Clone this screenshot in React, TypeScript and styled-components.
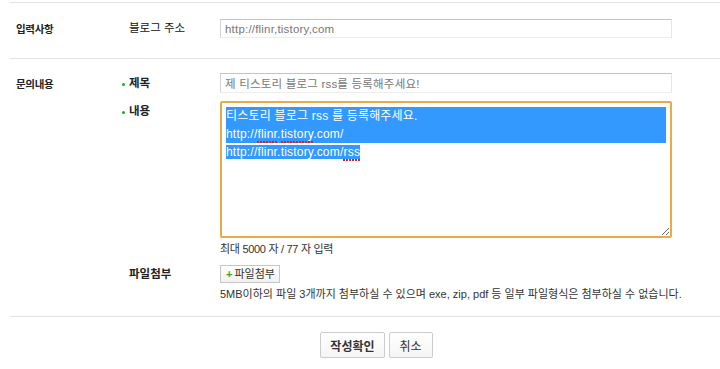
import React from "react";
import styled, { createGlobalStyle } from "styled-components";

const GlobalStyle = createGlobalStyle`
  html, body { margin: 0; padding: 0; background: #fff; overflow: hidden; }
  body {
    font-family: "Liberation Sans", "Noto Sans CJK KR", sans-serif;
    color: #333;
  }
  * { box-sizing: border-box; }
`;

const Page = styled.div`
  padding: 2px 0 0 10px;
`;

const Form = styled.form`
  width: 733px;
  border-top: 1px solid #e3e3e3;
`;

const Section = styled.div<{ $pad: string }>`
  display: grid;
  grid-template-columns: 112px 1fr;
  align-items: start;
  padding: ${(p) => p.$pad};
  border-bottom: 1px solid #e3e3e3;
`;

const SectionLabel = styled.div<{ $offset?: number }>`
  padding-left: 6px;
  margin-top: ${(p) => p.$offset ?? 0}px;
  font-size: 10.5px;
  font-weight: 700;
  line-height: 20px;
  letter-spacing: -0.3px;
  color: #222;
`;

const Fields = styled.div`
  display: flex;
  flex-direction: column;
`;

const Field = styled.div<{ $gap?: number }>`
  display: grid;
  grid-template-columns: 98px 1fr;
  align-items: start;
  margin-top: ${(p) => p.$gap ?? 0}px;
`;

const FieldLabel = styled.div<{ $h: number; $bullet?: boolean; $bold?: boolean }>`
  padding-left: ${(p) => (p.$bullet ? 0 : 7)}px;
  font-size: 11.5px;
  font-weight: ${(p) => (p.$bold ? 700 : 400)};
  line-height: ${(p) => p.$h}px;
  color: ${(p) => (p.$bold ? "#222" : "#111")};
  white-space: nowrap;
  &::before {
    content: "";
    display: ${(p) => (p.$bullet ? "inline-block" : "none")};
    width: 3px;
    height: 3px;
    border-radius: 50%;
    background: #22a722;
    margin-right: 4px;
    vertical-align: middle;
    position: relative;
    top: 1px;
  }
`;

const Control = styled.div`
  display: flex;
  flex-direction: column;
  align-items: flex-start;
`;

const TextInput = styled.input<{ $h: number }>`
  width: 452px;
  height: ${(p) => p.$h}px;
  border: 1px solid;
  border-color: #c4c4c4 #e6e6e6 #ededed #d2d2d2;
  padding: 0 4px;
  font-family: "Liberation Sans", "Noto Sans CJK KR", sans-serif;
  font-size: 11.5px;
  letter-spacing: 0.2px;
  color: #777;
  background: #fff;
  outline: none;
`;

const Editor = styled.div`
  width: 452px;
  height: 137px;
  border: 2px solid #e9aa48;
  border-radius: 2px;
  padding: 4px;
  resize: vertical;
  overflow: auto;
  font-size: 12px;
  line-height: 18px;
  letter-spacing: 0.2px;
  color: #fff;
  white-space: nowrap;
`;

const SelLine = styled.span<{ $full?: boolean }>`
  display: ${(p) => (p.$full ? "block" : "inline")};
  background: #3399ff;
  color: #fff;
`;

const Misspelled = styled.span`
  padding-bottom: 2px;
  background-image:
    linear-gradient(45deg, transparent 40%, #e02020 40%, #e02020 60%, transparent 60%),
    linear-gradient(-45deg, transparent 40%, #e02020 40%, #e02020 60%, transparent 60%);
  background-size: 3px 2px;
  background-repeat: repeat-x;
  background-position: 0 100%;
`;

const SmallText = styled.div<{ $mt: number; $ls: number }>`
  margin-top: ${(p) => p.$mt}px;
  font-size: 11px;
  line-height: 14px;
  letter-spacing: ${(p) => p.$ls}px;
  color: #333;
  white-space: nowrap;
`;

const AttachButton = styled.button`
  height: 18px;
  padding: 0 4px 0 5px;
  border: 1px solid #c6c6c6;
  background: linear-gradient(#ffffff, #f1f1f1);
  font-family: "Liberation Sans", "Noto Sans CJK KR", sans-serif;
  font-size: 11px;
  line-height: 16px;
  color: #333;
  display: flex;
  align-items: center;
  gap: 2px;
`;

const Plus = styled.span`
  color: #2fa52f;
  font-weight: 700;
  font-size: 11px;
`;

const Actions = styled.div`
  display: flex;
  justify-content: center;
  gap: 4px;
  padding-top: 15px;
`;

const ActionButton = styled.button<{ $primary?: boolean }>`
  height: 26px;
  padding: 0 ${(p) => (p.$primary ? 9 : 10)}px;
  border: 1px solid #cccccc;
  border-radius: 2px;
  background: linear-gradient(#ffffff, #f5f5f5);
  box-shadow: 0 1px 0 #e6e6e6;
  font-family: "Liberation Sans", "Noto Sans CJK KR", sans-serif;
  font-size: 12px;
  font-weight: ${(p) => (p.$primary ? 700 : 400)};
  color: #333;
`;

export default function App() {
  return (
    <Page>
      <GlobalStyle />
      <Form onSubmit={(e) => e.preventDefault()}>
        <Section $pad="16px 0 19px">
          <SectionLabel>입력사항</SectionLabel>
          <Fields>
            <Field>
              <FieldLabel $h={19}>블로그 주소</FieldLabel>
              <Control>
                <TextInput $h={19} readOnly value="http://flinr,tistory,com" />
              </Control>
            </Field>
          </Fields>
        </Section>

        <Section $pad="14px 0 15px">
          <SectionLabel $offset={1}>문의내용</SectionLabel>
          <Fields>
            <Field>
              <FieldLabel $h={20} $bullet $bold>
                제목
              </FieldLabel>
              <Control>
                <TextInput $h={20} readOnly value="제 티스토리 블로그 rss를 등록해주세요!" />
              </Control>
            </Field>
            <Field $gap={8}>
              <FieldLabel $h={20} $bullet $bold>
                내용
              </FieldLabel>
              <Control>
                <Editor role="textbox" aria-multiline="true">
                  <SelLine $full>티스토리 블로그 rss 를 등록해주세요.</SelLine>
                  <SelLine $full>
                    http://<Misspelled>flinr</Misspelled>.<Misspelled>tistory</Misspelled>.com/
                  </SelLine>
                  <SelLine>
                    http://flinr.tistory.com/<Misspelled>rss</Misspelled>
                  </SelLine>
                </Editor>
                <SmallText $mt={4} $ls={-0.3}>
                  최대 5000 자 / 77 자 입력
                </SmallText>
              </Control>
            </Field>
            <Field $gap={9}>
              <FieldLabel $h={18} $bold>
                파일첨부
              </FieldLabel>
              <Control>
                <AttachButton type="button">
                  <Plus>+</Plus>파일첨부
                </AttachButton>
                <SmallText $mt={4} $ls={0}>
                  5MB이하의 파일 3개까지 첨부하실 수 있으며 exe, zip, pdf 등 일부 파일형식은 첨부하실 수 없습니다.
                </SmallText>
              </Control>
            </Field>
          </Fields>
        </Section>

        <Actions>
          <ActionButton type="submit" $primary>
            작성확인
          </ActionButton>
          <ActionButton type="button">취소</ActionButton>
        </Actions>
      </Form>
    </Page>
  );
}
